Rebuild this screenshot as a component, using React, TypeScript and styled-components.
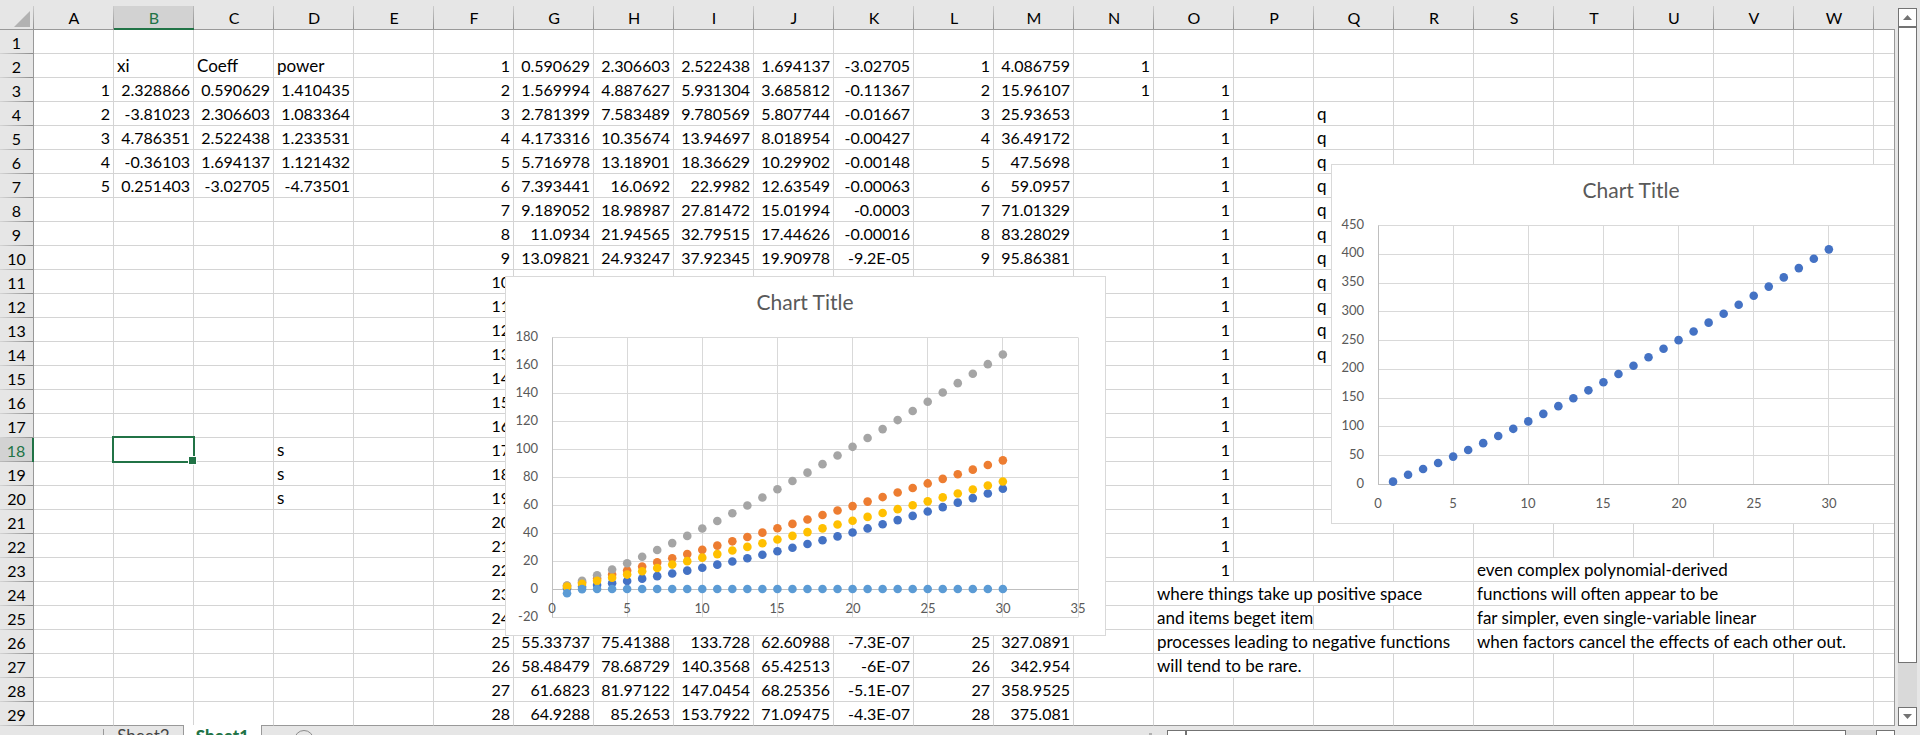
import React from "react";
import styled, { createGlobalStyle, css } from "styled-components";

const GREEN = "#217346";
const CHROME = "#e6e6e6";
const LINE = "#999999";
const GRID = "#d4d4d4";

const GlobalStyle = createGlobalStyle`
  * { box-sizing: border-box; }
  body {
    margin: 0;
    background: ${CHROME};
    color: #000;
    font-family: Lato, "Open Sans", sans-serif;
    font-size: 16px;
  }
`;

const Workbook = styled.main`
  display: flex;
  flex-direction: column;
  height: 100vh;
  overflow: hidden;
`;

const SheetArea = styled.div`
  display: flex;
  flex: none;
`;

const GridPane = styled.div`
  position: relative;
  flex: 1;
  min-width: 0;
  overflow: hidden;

  &::after {
    content: "";
    position: absolute;
    top: 29px;
    right: 0;
    bottom: 0;
    width: 1px;
    background: ${LINE};
  }
`;

const Grid = styled.table`
  table-layout: fixed;
  width: 0;
  border-collapse: separate;
  border-spacing: 0;
`;

const HeadCol = styled.col`
  width: 34px;
`;

const DataCol = styled.col`
  width: 80px;
`;

const ColumnHead = styled.th<{ $active?: boolean }>`
  height: 30px;
  padding: 6px 0 0;
  font-weight: 400;
  line-height: 22px;
  border-bottom: 1px solid ${LINE};
  background:
    linear-gradient(#cccccc, #8c8c8c) right 6px / 1px 24px no-repeat,
    ${CHROME};
  ${(p) =>
    p.$active &&
    css`
      color: ${GREEN};
      line-height: 21px;
      border-bottom: 2px solid ${GREEN};
      background:
        linear-gradient(#bbbbbb, #8c8c8c) right bottom / 1px 22px no-repeat,
        linear-gradient(#d2d2d2, #d2d2d2) left bottom / 100% 22px no-repeat,
        ${CHROME};
    `}
`;

const Corner = styled(ColumnHead)`
  svg {
    display: block;
    margin: 3px 0 0 14px;
  }
`;

const RowHead = styled.th<{ $active?: boolean }>`
  height: 24px;
  padding: 1px 0 0;
  font-weight: 400;
  line-height: 23px;
  border-right: 1px solid ${LINE};
  background:
    linear-gradient(90deg, #d4d4d4, #8c8c8c) left bottom / 100% 1px no-repeat,
    ${CHROME};
  ${(p) =>
    p.$active &&
    css`
      color: ${GREEN};
      border-right: 2px solid ${GREEN};
      background:
        linear-gradient(90deg, #bbbbbb, #8c8c8c) left bottom / 100% 1px no-repeat,
        #d2d2d2;
    `}
`;

const Cell = styled.td<{ $text?: boolean; $last?: boolean }>`
  position: relative;
  height: 24px;
  padding: 1px 3px 0;
  font-size: ${(p) => (p.$text ? 17 : 16)}px;
  line-height: 22px;
  white-space: nowrap;
  text-align: ${(p) => (p.$text ? "left" : "right")};
  background: #fff;
  border-right: 1px solid ${GRID};
  border-bottom: 1px solid ${(p) => (p.$last ? LINE : GRID)};
`;

const Selection = styled.span`
  position: absolute;
  z-index: 1;
  inset: -2px;
  border: 2px solid ${GREEN};

  &::after {
    content: "";
    position: absolute;
    right: -4px;
    bottom: -4px;
    width: 7px;
    height: 7px;
    background: ${GREEN};
    border: 1px solid #fff;
  }
`;

const FloatingChart = styled.svg<{ $left: number; $top: number }>`
  position: absolute;
  left: ${(p) => p.$left}px;
  top: ${(p) => p.$top}px;
  width: 601px;
  height: 360px;
  font-size: 13px;
  fill: #595959;
`;

const ChartTitle = styled.text`
  font-size: 21px;
`;

const VerticalGutter = styled.div`
  display: flex;
  flex: none;
  width: 25px;
  padding: 8px 3px 0;
`;

const ScrollBar = styled.div<{ $horizontal?: boolean }>`
  display: flex;
  flex: 1;
  flex-direction: ${(p) => (p.$horizontal ? "row" : "column")};
  background: #d9d9d9;
`;

const ScrollButton = styled.button`
  display: flex;
  align-items: center;
  justify-content: center;
  flex: none;
  width: 19px;
  height: 19px;
  padding: 0;
  background: #fff;
  border: 1px solid #737373;
`;

const ScrollThumb = styled.div<{ $share: number }>`
  flex: ${(p) => p.$share} 1 0;
  background: #fff;
  border: 1px solid #737373;
`;

const ScrollTrack = styled.div<{ $share: number }>`
  flex: ${(p) => p.$share} 1 0;
`;

const BottomBar = styled.div`
  display: flex;
  flex: none;
  height: 28px;
`;

const TabStrip = styled.nav`
  display: flex;
  flex: 1;
  padding-left: 103px;
`;

const Tab = styled.button<{ $active?: boolean }>`
  width: 79px;
  padding: 0 0 8px;
  border: 0;
  background: transparent;
  color: #444;
  font: inherit;
  font-size: 17px;
  line-height: 20px;
  ${(p) =>
    p.$active &&
    css`
      position: relative;
      margin-top: -1px;
      background: #fff;
      color: ${GREEN};
      font-weight: 900;
      border: solid ${LINE};
      border-width: 0 1px;
    `}
`;

const TabDivider = styled.span`
  width: 1px;
  height: 20px;
  margin-top: 3px;
  background: ${LINE};
`;

const AddSheet = styled.button`
  display: flex;
  margin-left: 32px;
  padding: 4px 0 0;
  border: 0;
  background: transparent;
`;

const Splitter = styled.span`
  width: 3px;
  height: 15px;
  margin: 7px 15px 0 0;
  border-top: 3px solid #b0b0b0;
`;

const HorizontalArea = styled.div`
  display: flex;
  width: 38%;
  max-width: 728px;
  margin-right: 25px;
  padding-top: 4px;
`;

const COLUMNS = "ABCDEFGHIJKLMNOPQRSTUVW".split("");
const ROW_COUNT = 29;

type Entry = { value: string; text?: boolean; span?: number };
const cells: Record<string, Entry> = {};

const fill = (column: string, row: number, values: string[], text = false) =>
  values.forEach((value, i) => {
    cells[column + (row + i)] = { value, text };
  });
const note = (address: string, value: string, span = 1) => {
  cells[address] = { value, text: true, span };
};
const repeat = (value: string, count: number) => Array(count).fill(value) as string[];
const count = (from: number, to: number) =>
  Array.from({ length: to - from + 1 }, (_, i) => String(from + i));

note("B2", "xi");
note("C2", "Coeff");
note("D2", "power");
fill("A", 3, count(1, 5));
fill("B", 3, ["2.328866", "-3.81023", "4.786351", "-0.36103", "0.251403"]);
fill("C", 3, ["0.590629", "2.306603", "2.522438", "1.694137", "-3.02705"]);
fill("D", 3, ["1.410435", "1.083364", "1.233531", "1.121432", "-4.73501"]);
fill("D", 18, repeat("s", 3), true);

fill("F", 2, count(1, 28));
// Results beside the index column; the rows between the blocks lie under the chart.
fill("G", 2, ["0.590629", "1.569994", "2.781399", "4.173316", "5.716978", "7.393441", "9.189052", "11.0934", "13.09821"]);
fill("H", 2, ["2.306603", "4.887627", "7.583489", "10.35674", "13.18901", "16.0692", "18.98987", "21.94565", "24.93247"]);
fill("I", 2, ["2.522438", "5.931304", "9.780569", "13.94697", "18.36629", "22.9982", "27.81472", "32.79515", "37.92345"]);
fill("J", 2, ["1.694137", "3.685812", "5.807744", "8.018954", "10.29902", "12.63549", "15.01994", "17.44626", "19.90978"]);
fill("K", 2, ["-3.02705", "-0.11367", "-0.01667", "-0.00427", "-0.00148", "-0.00063", "-0.0003", "-0.00016", "-9.2E-05"]);
fill("L", 2, count(1, 9));
fill("M", 2, ["4.086759", "15.96107", "25.93653", "36.49172", "47.5698", "59.0957", "71.01329", "83.28029", "95.86381"]);

fill("G", 26, ["55.33737", "58.48479", "61.6823", "64.9288"]);
fill("H", 26, ["75.41388", "78.68729", "81.97122", "85.2653"]);
fill("I", 26, ["133.728", "140.3568", "147.0454", "153.7922"]);
fill("J", 26, ["62.60988", "65.42513", "68.25356", "71.09475"]);
fill("K", 26, ["-7.3E-07", "-6E-07", "-5.1E-07", "-4.3E-07"]);
fill("L", 26, count(25, 28));
fill("M", 26, ["327.0891", "342.954", "358.9525", "375.081"]);

fill("N", 2, repeat("1", 2));
fill("O", 3, repeat("1", 21));
fill("Q", 4, repeat("q", 11), true);

note("O24", "where things take up positive space", 4);
note("O25", "and items beget item", 2);
note("O26", "processes leading to negative functions", 4);
note("O27", "will tend to be rare.", 2);
note("S23", "even complex polynomial-derived", 4);
note("S24", "functions will often appear to be", 4);
note("S25", "far simpler, even single-variable linear", 4);
note("S26", "when factors cancel the effects of each other out.", 5);

function SheetRow({ row }: { row: number }) {
  const out: React.ReactNode[] = [];
  const last = row === ROW_COUNT;
  for (let i = 0; i < COLUMNS.length; ) {
    const address = COLUMNS[i] + row;
    const entry = cells[address];
    const span = entry?.span ?? 1;
    out.push(
      <Cell key={address} colSpan={span} $text={entry?.text} $last={last}>
        {entry?.value}
        {address === "B18" && <Selection />}
      </Cell>
    );
    i += span;
  }
  return (
    <tr>
      <RowHead scope="row" $active={row === 18}>
        {row}
      </RowHead>
      {out}
      <Cell $last={last} />
    </tr>
  );
}

type Series = { color: string; at: (x: number) => number };

const power = (coefficient: number, exponent: number) => (x: number) =>
  coefficient * Math.pow(x, exponent);

const terms: Series[] = [
  { color: "#4472c4", at: power(0.590629, 1.410435) },
  { color: "#ed7d31", at: power(2.306603, 1.083364) },
  { color: "#a5a5a5", at: power(2.522438, 1.233531) },
  { color: "#ffc000", at: power(1.694137, 1.121432) },
  { color: "#5b9bd5", at: power(-3.02705, -4.73501) },
];
const total: Series[] = [
  { color: "#4472c4", at: (x) => terms.reduce((sum, t) => sum + t.at(x), 0) },
];

type ChartProps = {
  left: number;
  top: number;
  series: Series[];
  min: number;
  max: number;
  step: number;
  xTicks: number[];
  plotTop: number;
  plotBottom: number;
  labelY: number;
};

function ScatterChart(props: ChartProps) {
  const { left, top, series, min, max, step, xTicks, plotTop, plotBottom, labelY } = props;
  const x = (v: number) => 47 + (v * 526) / 35;
  const y = (v: number) => plotBottom - ((v - min) * (plotBottom - plotTop)) / (max - min);
  const snap = (v: number) => Math.floor(v) + 0.5;
  const rows = Array.from({ length: (max - min) / step + 1 }, (_, i) => min + i * step);
  return (
    <FloatingChart $left={left} $top={top} viewBox="0 0 601 360" role="img" aria-label="Chart Title">
      <rect x="0.5" y="0.5" width="600" height="359" fill="#fff" stroke="#d9d9d9" />
      <g stroke="#d9d9d9">
        {rows.map((v) => (
          <line key={v} x1={x(0)} x2={x(35)} y1={snap(y(v))} y2={snap(y(v))} />
        ))}
        {xTicks.map((v) => (
          <line key={v} x1={snap(x(v))} x2={snap(x(v))} y1={plotTop} y2={plotBottom} />
        ))}
      </g>
      <g stroke="#bfbfbf">
        <line x1={x(0)} x2={x(35)} y1={snap(y(0))} y2={snap(y(0))} />
        <line x1={snap(x(0))} x2={snap(x(0))} y1={plotTop} y2={plotBottom} />
      </g>
      {series.map((s) => (
        <g key={s.color} fill={s.color}>
          {Array.from({ length: 30 }, (_, i) => i + 1).map((v) => (
            <circle key={v} cx={x(v)} cy={y(s.at(v)) - 0.5} r="4.3" />
          ))}
        </g>
      ))}
      <ChartTitle x="300" y="34" textAnchor="middle">
        Chart Title
      </ChartTitle>
      {rows.map((v) => (
        <text key={v} x="33" y={Math.round(y(v)) + 3} textAnchor="end">
          {v}
        </text>
      ))}
      {xTicks.map((v) => (
        <text key={v} x={Math.round(x(v))} y={labelY} textAnchor="middle">
          {v}
        </text>
      ))}
    </FloatingChart>
  );
}

const Arrow = ({ points }: { points: string }) => (
  <svg width="9" height="9" viewBox="0 0 9 9" aria-hidden="true">
    <polygon points={points} fill="#737373" />
  </svg>
);

export default function App() {
  return (
    <Workbook>
      <GlobalStyle />
      <SheetArea>
        <GridPane>
          <Grid>
            <colgroup>
              <HeadCol />
              {COLUMNS.map((c) => (
                <DataCol key={c} />
              ))}
              <DataCol />
            </colgroup>
            <thead>
              <tr>
                <Corner aria-label="Select all">
                  <svg width="16" height="16" viewBox="0 0 16 16" aria-hidden="true">
                    <polygon points="16,0 16,16 0,16" fill="#b2b2b2" />
                  </svg>
                </Corner>
                {COLUMNS.map((c) => (
                  <ColumnHead key={c} scope="col" $active={c === "B"}>
                    {c}
                  </ColumnHead>
                ))}
                <ColumnHead />
              </tr>
            </thead>
            <tbody>
              {Array.from({ length: ROW_COUNT }, (_, i) => (
                <SheetRow key={i} row={i + 1} />
              ))}
            </tbody>
          </Grid>
          <ScatterChart
            left={505}
            top={276}
            series={terms}
            min={-20}
            max={180}
            step={20}
            xTicks={[0, 5, 10, 15, 20, 25, 30, 35]}
            plotTop={61.5}
            plotBottom={341.5}
            labelY={337}
          />
          <ScatterChart
            left={1331}
            top={164}
            series={total}
            min={0}
            max={450}
            step={50}
            xTicks={[0, 5, 10, 15, 20, 25, 30]}
            plotTop={61.5}
            plotBottom={320.5}
            labelY={344}
          />
        </GridPane>
        <VerticalGutter>
          <ScrollBar>
            <ScrollButton aria-label="Scroll up">
              <Arrow points="4.5,2 9,7 0,7" />
            </ScrollButton>
            <ScrollThumb $share={636} />
            <ScrollTrack $share={44} />
            <ScrollButton aria-label="Scroll down">
              <Arrow points="0,2 9,2 4.5,7" />
            </ScrollButton>
          </ScrollBar>
        </VerticalGutter>
      </SheetArea>
      <BottomBar>
        <TabStrip>
          <TabDivider />
          <Tab>Sheet2</Tab>
          <Tab $active>Sheet1</Tab>
          <AddSheet aria-label="New sheet">
            <svg width="20" height="20" viewBox="0 0 20 20" fill="none" stroke="#8a8a8a" aria-hidden="true">
              <circle cx="10" cy="10" r="9.5" />
              <path d="M10 5v10M5 10h10" />
            </svg>
          </AddSheet>
        </TabStrip>
        <Splitter />
        <HorizontalArea>
          <ScrollBar $horizontal>
            <ScrollButton aria-label="Scroll left">
              <Arrow points="7,0 7,9 2,4.5" />
            </ScrollButton>
            <ScrollThumb $share={660} />
            <ScrollTrack $share={30} />
            <ScrollButton aria-label="Scroll right">
              <Arrow points="2,0 7,4.5 2,9" />
            </ScrollButton>
          </ScrollBar>
        </HorizontalArea>
      </BottomBar>
    </Workbook>
  );
}
